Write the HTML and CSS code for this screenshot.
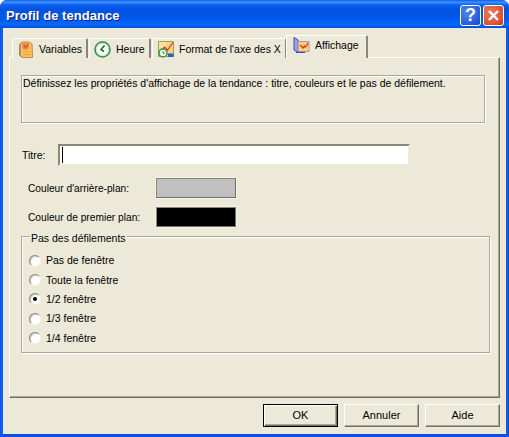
FILE: index.html
```html
<!DOCTYPE html>
<html lang="fr">
<head>
<meta charset="utf-8">
<title>Profil de tendance</title>
<link rel="stylesheet" href="styles.css">
</head>
<body>
<div class="window">
  <header class="titlebar">
    <h1 class="title">Profil de tendance</h1>
    <div class="caption-buttons">
      <button class="cap cap-help">?</button>
      <button class="cap cap-close"><svg width="13" height="13" viewBox="0 0 13 13"><path d="M2 2 11 11M11 2 2 11" stroke="#fff" stroke-width="2.4" fill="none"/></svg></button>
    </div>
  </header>
  <div class="client">
    <div class="tabs">
      <div class="tab tab-variables">
        <svg class="tab-icon" width="14" height="17" viewBox="0 0 14 17"><path d="M1 2.500 4 1h6l3 2 .500 13.500H3L.5 14z" fill="#f8c25c" stroke="#c98a3a"/><path d="M3 2h7v5.500L6.500 9 3 7.500z" fill="#f08a50"/><path d="M5 4.500l1.500 2 2.500-3" stroke="#c02a20" fill="none"/><path d="M4 11h7M4 13.500h7" stroke="#e8a040"/><path d="M1 3v10.500L3 16" stroke="#6c7a78" fill="none"/></svg>
        <span>Variables</span>
      </div>
      <div class="tab tab-heure">
        <svg class="tab-icon" width="17" height="17" viewBox="0 0 17 17"><circle cx="8.500" cy="8.500" r="7.500" fill="#fff" stroke="#3a8a4a" stroke-width="1.600"/><circle cx="8.500" cy="8.500" r="6" fill="none" stroke="#c4e0c0"/><path d="M10.500 4.500 7 8.500l3 2" stroke="#1f6a30" stroke-width="1.600" fill="none"/></svg>
        <span>Heure</span>
      </div>
      <div class="tab tab-format">
        <svg class="tab-icon" width="16" height="17" viewBox="0 0 16 17"><path d="M.5.5h15v15H.5z" fill="#f8d27a" stroke="#a09a60"/><path d="M1 1h7v6H1z" fill="#f4e4a0"/><path d="M2 11 6.500 6l3 3L15 1.500" stroke="#e0301e" stroke-width="1.200" fill="none"/><path d="M10 12.500h5.500V16H10z" fill="#2f5fc8"/><circle cx="5" cy="12" r="4" fill="#f4faf0" stroke="#2f9a3b" stroke-width="1.500"/><path d="M5 10v2.200h2" stroke="#2f8d3b" fill="none"/></svg>
        <span class="tab-clip">Format de l'axe des X</span>
      </div>
      <div class="tab tab-active">
        <svg class="tab-icon" width="17" height="17" viewBox="0 0 17 17"><path d="M1 .5 5 3v12.500L1 13z" fill="#a4a4e8" stroke="#4444b8"/><path d="M5 4.500h11v10H5z" fill="#f8d27a" stroke="#9494c8"/><path d="M7 8l3 3 1.500-2 1 1L15 6" stroke="#e0301e" stroke-width="1.300" fill="none"/><path d="M3 15.500h9" stroke="#4444b8"/></svg>
        <span>Affichage</span>
      </div>
    </div>
    <main class="panel">
      <p class="description">Définissez les propriétés d'affichage de la tendance : titre, couleurs et le pas de défilement.</p>
      <div class="title-row">
        <label class="title-label">Titre:</label>
        <div class="text-input"><span class="caret"></span></div>
      </div>
      <div class="color-row color-row-bg">
        <span class="color-label">Couleur d'arrière-plan:</span>
        <span class="swatch swatch-grey"></span>
      </div>
      <div class="color-row color-row-fg">
        <span class="color-label">Couleur de premier plan:</span>
        <span class="swatch swatch-black"></span>
      </div>
      <fieldset class="group">
        <legend class="group-legend">Pas des défilements</legend>
        <div class="radio-row"><span class="radio"></span>Pas de fenêtre</div>
        <div class="radio-row"><span class="radio"></span>Toute la fenêtre</div>
        <div class="radio-row"><span class="radio radio-on"></span>1/2 fenêtre</div>
        <div class="radio-row"><span class="radio"></span>1/3 fenêtre</div>
        <div class="radio-row"><span class="radio"></span>1/4 fenêtre</div>
      </fieldset>
    </main>
    <footer class="footer">
      <button class="btn btn-default">OK</button>
      <button class="btn">Annuler</button>
      <button class="btn">Aide</button>
    </footer>
  </div>
</div>
</body>
</html>
```
FILE: styles.css
```css
* { box-sizing: border-box; }
html, body { margin: 0; height: 100%; background: #fff; }
body { font: 10.5px/13px "Liberation Sans", Arial, sans-serif; color: #000; overflow: hidden; }
.window {
  width: 509px; height: 437px; display: flex; flex-direction: column;
  border-radius: 7px 7px 0 0; overflow: hidden;
  padding: 0 3px 3px;
  background: linear-gradient(90deg, #0a4fe0 0, #1668f5 2px, #0a4fe0 3px, #0a4fe0 506px, #1668f5 507px, #0a3fc0 509px);
}
.titlebar {
  height: 29px; margin: 0 -3px; padding: 3px 5px 0 6px; display: flex; align-items: center; justify-content: space-between;
  background: linear-gradient(180deg, #0a58e8 0, #3f94ff 2px, #0a60f0 5px, #0053e0 9px, #0058ea 18px, #0668f8 24px, #0460f0 26px, #0040c8 29px);
}
.title { margin: 0; font: bold 13px/16px "Liberation Sans", Arial, sans-serif; letter-spacing: .05px; color: #fff; text-shadow: 1px 1px 0 #0f1f78; }
.caption-buttons { display: flex; gap: 2px; margin-top: -1px; }
.cap {
  width: 21px; height: 21px; padding: 0; border: 1px solid #fff; border-radius: 3px;
  display: flex; align-items: center; justify-content: center; color: #fff;
}
.cap-help { font: bold 18px/18px "Liberation Sans", Arial, sans-serif; background: radial-gradient(circle at 30% 30%, #4f86f0, #2a5ae0 70%, #1a40b8); }
.cap-close { background: radial-gradient(circle at 35% 35%, #e8805a, #dc5030 70%, #c03010); }
.client { flex: 1; background: #ece9d8; padding: 7px 6px 7px 6px; display: flex; flex-direction: column; }
.tabs { display: flex; padding-left: 3px; margin-bottom: -1px; align-items: flex-end; position: relative; z-index: 1; }
.tab {
  height: 20px; display: flex; align-items: center; background: #ece9d8; padding-top: 1px;
  border: 1px solid #fff; border-bottom: 0; border-right: 2px solid #8a8778; border-radius: 2px 2px 0 0;
  overflow: hidden; white-space: nowrap; flex: none;
}
.tab-variables { width: 76px; padding-left: 6px; gap: 6px; }
.tab-heure { width: 62px; padding-left: 4px; gap: 5px; margin-left: 1px; }
.tab-format { width: 135px; padding-left: 5px; gap: 5px; margin-left: 1px; }
.tab-clip { display: block; width: 104px; overflow: hidden; }
.tab-active { width: 82px; height: 23px; padding: 0 0 3px 6px; gap: 5px; margin-left: -1px; position: relative; }
.tab-icon { flex: none; }
.panel {
  height: 341px; padding: 17px 9px 0 11px; background: #ece9d8;
  border: 1px solid #fff; border-right-color: #716f64; border-bottom-color: #716f64;
  box-shadow: inset -1px -1px 0 #aca899;
}
.description {
  margin: 0; width: 464px; height: 48px; padding: 1px 0 0 1px;
  border: 1px solid #aca899; box-shadow: 1px 1px 0 #fff, inset 1px 1px 0 #fff;
}
.title-row { display: flex; align-items: center; margin-top: 21px; margin-left: 1px; }
.title-label { width: 36px; }
.text-input {
  width: 352px; height: 22px; background: #fff; display: flex; align-items: center; padding-left: 2px;
  border: 2px solid; border-color: #8a8778 #ece9d8 #ece9d8 #8a8778;
}
.caret { width: 1px; height: 16px; background: #000; }
.color-row { display: flex; align-items: center; margin-left: 7px; }
.color-row-bg { margin-top: 12px; }
.color-row-fg { margin-top: 9px; }
.color-label { width: 128px; font-size: 10.2px; }
.swatch {
  width: 80px; height: 20px; border: 1px solid; border-color: #8a8778 #716f64 #716f64 #8a8778;
  box-shadow: 0 0 0 1px #f4f2e8;
}
.swatch-grey { background: #c0c0c0; }
.swatch-black { background: #000; }
.group {
  margin: 1px 0 0; padding: 0 0 0 7px; width: 469px; height: 125px; min-width: 0;
  border: 1px solid #aca899; box-shadow: 1px 1px 0 #fff, inset 1px 1px 0 #fff;
}
.group-legend { padding: 4px 1px 0; margin-left: 1px; line-height: 13px; }
.radio-row { display: flex; align-items: center; height: 19.4px; gap: 5px; position: relative; top: 1px; }
.radio-row:first-of-type { margin-top: 5px; }
.radio {
  width: 12px; height: 12px; border-radius: 50%; background: #fff; position: relative; flex: none;
  border: 1px solid; border-color: #8a8778 #f4f2e8 #f4f2e8 #8a8778;
  box-shadow: inset 1px 1px 0 #cfccbc;
}
.radio-on::after { content: ""; position: absolute; left: 3px; top: 3px; width: 4px; height: 4px; border-radius: 50%; background: #000; }
.footer { display: flex; justify-content: flex-end; gap: 6px; margin-top: 6px; }
.btn {
  width: 75px; height: 23px; padding: 0; font: 11px/13px "Liberation Sans", Arial, sans-serif; color: #000; background: #ece9d8;
  border: 1px solid; border-color: #fff #716f64 #716f64 #fff; box-shadow: inset -1px -1px 0 #aca899;
}
.btn-default { border-color: #000; box-shadow: inset 1px 1px 0 #fff, inset -1px -1px 0 #716f64, inset -2px -2px 0 #aca899; }
```
